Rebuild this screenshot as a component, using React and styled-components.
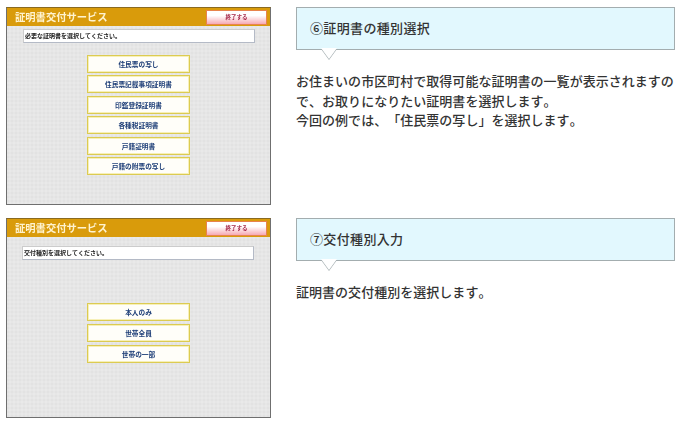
import React from "react";
import styled, { createGlobalStyle } from "styled-components";

const Global = createGlobalStyle`
  html, body { margin: 0; padding: 0; background: #fff; }
  body {
    width: 690px;
    height: 422px;
    overflow: hidden;
    font-family: "Noto Sans CJK JP", "Liberation Sans", sans-serif;
    font-kerning: none;
    text-spacing-trim: space-all;
  }
`;

const Page = styled.main`
  display: flex;
  flex-direction: column;
  gap: 13px;
  padding: 7px 15px 0 6px;
`;

const Row = styled.section`
  display: grid;
  grid-template-columns: 265px 379px;
  column-gap: 25px;
  align-items: start;
`;

const Screen = styled.div`
  box-sizing: border-box;
  height: ${(p) => p.$height}px;
  border: 1px solid #6f6f6f;
  border-top-color: #8a6a20;
  background-color: #e6e6e6;
  background-image: radial-gradient(circle at 1px 1px, #e2e2e2 0.8px, transparent 1px),
    radial-gradient(circle at 3px 3px, #e9e9e9 0.8px, transparent 1px);
  background-size: 4px 4px;
  display: flex;
  flex-direction: column;
  filter: blur(0.35px);
`;

const TitleBar = styled.header`
  height: 18px;
  flex: none;
  background: #d99b0b;
  display: flex;
  align-items: center;
  justify-content: space-between;
  padding: 0 3px 0 8px;
`;

const Title = styled.h1`
  margin: 0;
  font-size: 10.3px;
  font-weight: 700;
  line-height: 18px;
  color: #fff3cf;
`;

const EndButton = styled.button`
  box-sizing: border-box;
  width: 61px;
  height: 15px;
  padding: 0;
  border: 1px solid #e8844c;
  background: linear-gradient(#ffffff 0%, #fff 35%, #f6a9b4 100%);
  color: #a5274a;
  font: 700 5.5px "Noto Sans CJK JP", sans-serif;
`;

const Prompt = styled.div`
  box-sizing: border-box;
  align-self: flex-start;
  width: 232px;
  height: 14px;
  margin: ${(p) => p.$top}px 0 0 ${(p) => p.$left}px;
  padding-left: 1px;
  background: #fff;
  border: 1px solid #b4bac6;
  border-top-color: #ccc;
  border-left-color: #ccc;
  font-size: 6px;
  font-weight: 700;
  line-height: 12px;
  color: #222;
`;

const Choices = styled.div`
  display: flex;
  flex-direction: column;
  gap: ${(p) => p.$gap}px;
  align-self: flex-start;
  margin: ${(p) => p.$top}px 0 0 80px;
`;

const Choice = styled.button`
  box-sizing: border-box;
  width: 103px;
  height: 18px;
  padding: 0;
  background: #fffef9;
  border: 1px solid #dccb52;
  box-shadow: inset 0 0 0 1px #f7f0b8;
  color: #1f3f78;
  font: 700 6.7px "Noto Sans CJK JP", sans-serif;
`;

const Note = styled.article`
  display: flex;
  flex-direction: column;
`;

const Callout = styled.div`
  position: relative;
  box-sizing: border-box;
  height: 43px;
  padding: 0 0 3px 13px;
  display: flex;
  align-items: center;
  background: #e2f8fe;
  border: 1px solid #a3adaf;
  color: #333;
  font-size: 13px;
  font-weight: 500;
  letter-spacing: 0.35px;
  &::before,
  &::after {
    content: "";
    position: absolute;
    left: 24px;
    width: 0;
    height: 0;
    border-left: 8px solid transparent;
    border-right: 8px solid transparent;
  }
  &::before {
    top: 100%;
    border-top: 11px solid #a3adaf;
  }
  &::after {
    top: calc(100% - 1px);
    border-top: 11px solid #fff;
  }
`;

const Body = styled.p`
  margin: 21px 0 0;
  font-size: 13px;
  font-weight: 500;
  line-height: 19.7px;
  color: #333;
  letter-spacing: 0.03px;
`;

const first = ["住民票の写し", "住民票記載事項証明書", "印鑑登録証明書", "各種税証明書", "戸籍証明書", "戸籍の附票の写し"];
const second = ["本人のみ", "世帯全員", "世帯の一部"];

export default function App() {
  return (
    <>
      <Global />
      <Page>
        <Row>
          <Screen $height={198}>
            <TitleBar>
              <Title>証明書交付サービス</Title>
              <EndButton>終了する</EndButton>
            </TitleBar>
            <Prompt $top={3} $left={16}>必要な証明書を選択してください。</Prompt>
            <Choices $top={12} $gap={2.4}>
              {first.map((t) => <Choice key={t}>{t}</Choice>)}
            </Choices>
          </Screen>
          <Note>
            <Callout>⑥証明書の種別選択</Callout>
            <Body>
              お住まいの市区町村で取得可能な証明書の一覧が表示されますので、お取りになりたい証明書を選択します。<br />
              今回の例では、「住民票の写し」を選択します。
            </Body>
          </Note>
        </Row>
        <Row>
          <Screen $height={200}>
            <TitleBar>
              <Title>証明書交付サービス</Title>
              <EndButton>終了する</EndButton>
            </TitleBar>
            <Prompt $top={9} $left={15}>交付種別を選択してください。</Prompt>
            <Choices $top={43} $gap={3}>
              {second.map((t) => <Choice key={t}>{t}</Choice>)}
            </Choices>
          </Screen>
          <Note>
            <Callout>⑦交付種別入力</Callout>
            <Body>証明書の交付種別を選択します。</Body>
          </Note>
        </Row>
      </Page>
    </>
  );
}
